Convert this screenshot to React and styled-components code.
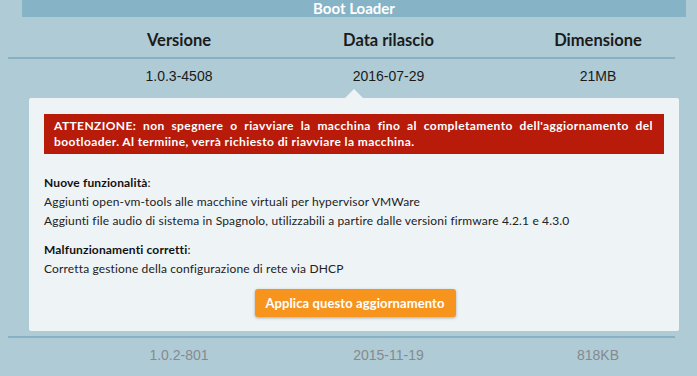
import React from "react";
import styled, { createGlobalStyle } from "styled-components";

const GlobalStyle = createGlobalStyle`
  html, body {
    margin: 0;
    padding: 0;
    overflow: hidden;
    background: #afcbd6;
  }
  body {
    font-family: "Lato", "Open Sans", sans-serif;
  }
`;

const columns = ["Versione", "Data rilascio", "Dimensione"];

const releases = [
  { version: "1.0.3-4508", date: "2016-07-29", size: "21MB", open: true },
  { version: "1.0.2-801", date: "2015-11-19", size: "818KB", open: false },
];

const App = () => {
  return (
    <>
      <GlobalStyle />
      <Page>
        <SectionBar>Boot Loader</SectionBar>
        <Table>
          <HeadRow>
            {columns.map((c) => (
              <HeadCell key={c}>{c}</HeadCell>
            ))}
          </HeadRow>
          {releases.map((r) => (
            <Release key={r.version}>
              <DataRow muted={!r.open}>
                <DataCell>{r.version}</DataCell>
                <DataCell>{r.date}</DataCell>
                <DataCell>{r.size}</DataCell>
              </DataRow>
              {r.open && (
                <Details>
                  <Warning>
                    ATTENZIONE: non spegnere o riavviare la macchina fino al
                    completamento dell'aggiornamento del bootloader. Al
                    termiine, verrà richiesto di riavviare la macchina.
                  </Warning>
                  <Section>
                    <SectionTitle>
                      <b>Nuove funzionalità</b>:
                    </SectionTitle>
                    <Line>
                      Aggiunti open-vm-tools alle macchine virtuali per
                      hypervisor VMWare
                    </Line>
                    <Line>
                      Aggiunti file audio di sistema in Spagnolo, utilizzabili
                      a partire dalle versioni firmware 4.2.1 e 4.3.0
                    </Line>
                  </Section>
                  <Section>
                    <SectionTitle>
                      <b>Malfunzionamenti corretti</b>:
                    </SectionTitle>
                    <Line>Corretta gestione della configurazione di rete via DHCP</Line>
                  </Section>
                  <Actions>
                    <ApplyButton>Applica questo aggiornamento</ApplyButton>
                  </Actions>
                </Details>
              )}
            </Release>
          ))}
        </Table>
      </Page>
    </>
  );
};

const Page = styled.div`
  width: 697px;
  height: 376px;
  overflow: hidden;
`;

const SectionBar = styled.div`
  margin-left: 22px;
  width: 664px;
  height: 17px;
  background: #86b3c5;
  color: #ffffff;
  font-weight: 700;
  font-size: 15px;
  line-height: 16px;
  text-align: center;
`;

const Table = styled.div`
  margin-left: 8px;
  width: 667px;
`;

const HeadRow = styled.div`
  display: grid;
  grid-template-columns: repeat(3, 120px);
  column-gap: 89.5px;
  padding: 15px 0 9px 111px;
  border-bottom: 2px solid #88b2c3;
`;

const HeadCell = styled.div`
  text-align: center;
  font-weight: 700;
  font-size: 16.5px;
  line-height: 16px;
  color: #1b1b1b;
`;

const Release = styled.div`
  border-bottom: 2px solid #88b2c3;
  &:last-child {
    border-bottom: none;
  }
`;

const DataRow = styled.div`
  display: grid;
  grid-template-columns: repeat(3, 120px);
  column-gap: 89.5px;
  padding: ${(p) => (p.muted ? "9px 0 5px 111px" : "9px 0 5px 111px")};
  color: ${(p) => (p.muted ? "#868a8c" : "#1a1a1a")};
  font-family: "Liberation Sans", Arial, sans-serif;
  font-size: 14px;
  line-height: 16px;
`;

const DataCell = styled.div`
  text-align: center;
`;

const Details = styled.div`
  position: relative;
  margin: 9px 0 5px 21px;
  width: 620px;
  padding: 16px 15px 14px;
  background: #eef3f6;
  border-radius: 2px;

  &::before {
    content: "";
    position: absolute;
    top: -9px;
    left: 316px;
    border-left: 9px solid transparent;
    border-right: 9px solid transparent;
    border-bottom: 9px solid #eef3f6;
  }
`;

const Warning = styled.div`
  background: #b81b0a;
  color: #ffffff;
  font-weight: 700;
  font-size: 12px;
  line-height: 16px;
  padding: 4px 11px 4px 10px;
  text-align: justify;
  letter-spacing: 0.4px;
  margin-bottom: 19px;
`;

const Section = styled.div`
  margin-bottom: 10px;
`;

const SectionTitle = styled.div`
  font-size: 12px;
  line-height: 19px;
  letter-spacing: 0.15px;
  color: #111;
  b {
    font-weight: 700;
  }
`;

const Line = styled.div`
  font-size: 12px;
  line-height: 19px;
  letter-spacing: 0.15px;
  color: #222;
`;

const Actions = styled.div`
  display: flex;
  justify-content: center;
  padding-top: 1px;
`;

const ApplyButton = styled.button`
  width: 201px;
  height: 28px;
  border: none;
  border-radius: 3px;
  background: #f7941e;
  color: #ffffff;
  font-family: "Lato", "Open Sans", sans-serif;
  font-weight: 700;
  font-size: 13px;
  letter-spacing: 0.1px;
  box-shadow: 0 1px 3px rgba(0, 0, 0, 0.3);
  cursor: pointer;
  margin-left: 2px;
`;

export default App;
